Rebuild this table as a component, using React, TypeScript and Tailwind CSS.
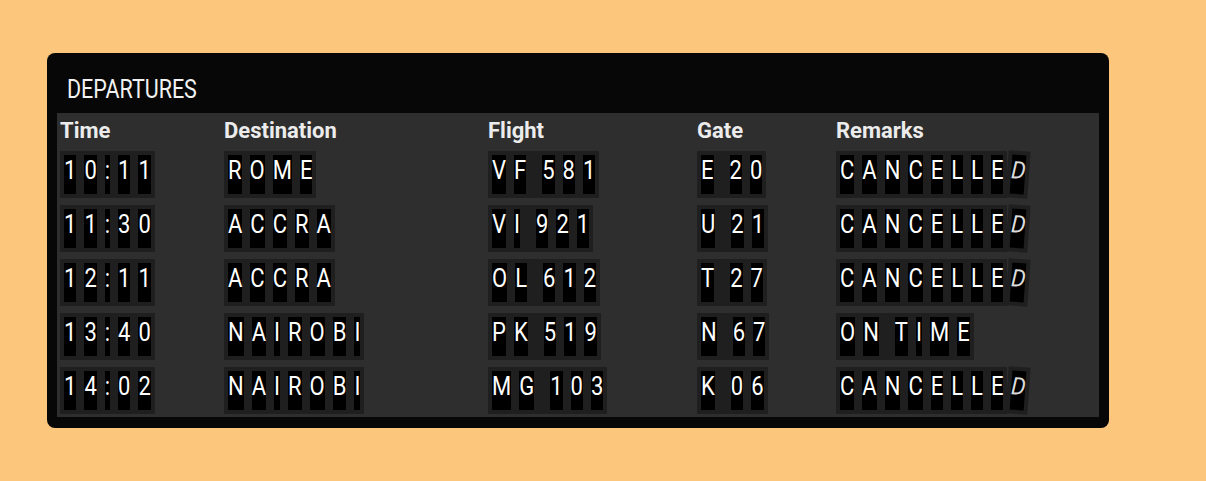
import React from 'react';

type Row = { time: string; dest: string; flight: string; gate: string; remark: string };

const rows: Row[] = [
  { time: '10:11', dest: 'ROME', flight: 'VF 581', gate: 'E 20', remark: 'CANCELLED' },
  { time: '11:30', dest: 'ACCRA', flight: 'VI 921', gate: 'U 21', remark: 'CANCELLED' },
  { time: '12:11', dest: 'ACCRA', flight: 'OL 612', gate: 'T 27', remark: 'CANCELLED' },
  { time: '13:40', dest: 'NAIROBI', flight: 'PK 519', gate: 'N 67', remark: 'ON TIME' },
  { time: '14:02', dest: 'NAIROBI', flight: 'MG 103', gate: 'K 06', remark: 'CANCELLED' },
];

const cols = 'grid grid-cols-[164px_264px_209px_139px_1fr]';

function Tile({ ch }: { ch: string }) {
  if (ch === ' ') return <span className="m-1 block w-0" />;
  return (
    <span className="m-1 block h-[39px] bg-black pt-[3px] leading-[26px] text-white">
      <span className="inline-block scale-y-[1.15]">{ch}</span>
    </span>
  );
}

function Board({ text }: { text: string }) {
  return (
    <div className="flex w-fit bg-[#1f1f1f]">
      {text.split('').map((ch, i) => (
        <Tile key={i} ch={ch} />
      ))}
    </div>
  );
}

// last letter caught mid-flip
function Remark({ text }: { text: string }) {
  if (text !== 'CANCELLED') return <Board text={text} />;
  return (
    <div className="flex items-start">
      <Board text={text.slice(0, -1)} />
      <div className="rotate-[4deg] bg-[#1f1f1f]">
        <span className="m-1 block h-[39px] bg-black pt-[3px] leading-[26px] text-[#dcdcdc]">
          <span className="inline-block scale-y-[1.1] -skew-x-[10deg]">D</span>
        </span>
      </div>
    </div>
  );
}

export default function App() {
  return (
    <div
      className="min-h-screen bg-[#fcc67c] pl-[47px] pt-[53px]"
      style={{ fontFamily: 'Roboto, "Liberation Sans", sans-serif' }}
    >
      <div className="w-[1062px] rounded-lg bg-[#070707] px-[10px] pb-[11px]">
        <div className="h-[60px] pl-[10px] pt-[24px]">
          <span className="inline-block scale-y-[1.18] text-[21.5px] leading-[25px] text-[#f2f2f2]">DEPARTURES</span>
        </div>
        <div className="bg-[#2e2e2e] pb-[3px] pl-[3px] pt-[5px]">
          <div className={`${cols} text-[22px] font-bold leading-[26px] text-[#ececec]`}>
            <div>Time</div>
            <div>Destination</div>
            <div>Flight</div>
            <div>Gate</div>
            <div>Remarks</div>
          </div>
          <div className="mt-[7px] flex flex-col gap-[7px] text-[22px]">
            {rows.map((r) => (
              <div key={r.time} className={`${cols} items-start`}>
                <Board text={r.time} />
                <Board text={r.dest} />
                <Board text={r.flight} />
                <Board text={r.gate} />
                <Remark text={r.remark} />
              </div>
            ))}
          </div>
        </div>
      </div>
    </div>
  );
}
